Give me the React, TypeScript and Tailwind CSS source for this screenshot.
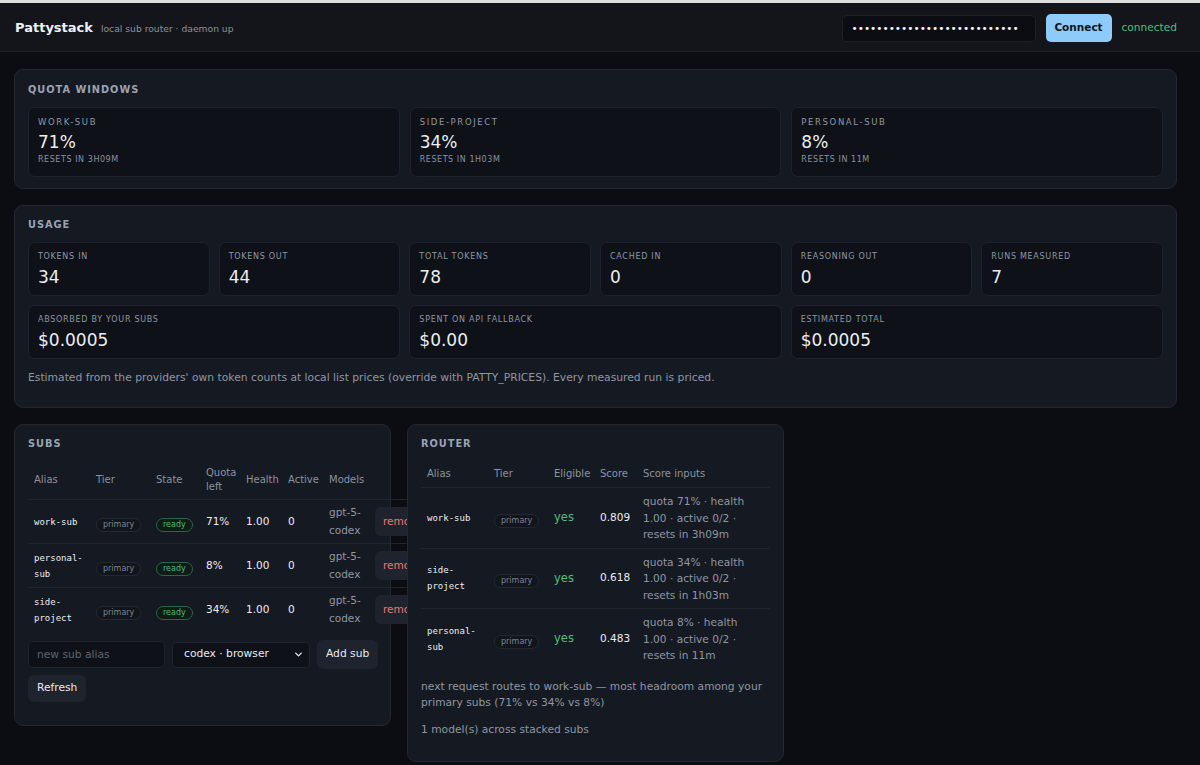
import { ChevronDown } from 'lucide-react';

const quotas = [
  { name: 'work-sub', pct: '71%', resets: 'resets in 3h09m' },
  { name: 'side-project', pct: '34%', resets: 'resets in 1h03m' },
  { name: 'personal-sub', pct: '8%', resets: 'resets in 11m' },
];

const usageTop = [
  { label: 'Tokens in', value: '34' },
  { label: 'Tokens out', value: '44' },
  { label: 'Total tokens', value: '78' },
  { label: 'Cached in', value: '0' },
  { label: 'Reasoning out', value: '0' },
  { label: 'Runs measured', value: '7' },
];

const usageCost = [
  { label: 'Absorbed by your subs', value: '$0.0005' },
  { label: 'Spent on API fallback', value: '$0.00' },
  { label: 'Estimated total', value: '$0.0005' },
];

const subs = [
  { alias: 'work-sub', quota: '71%' },
  { alias: 'personal-sub', quota: '8%' },
  { alias: 'side-project', quota: '34%' },
];

const routes = [
  { alias: 'work-sub', score: '0.809', inputs: 'quota 71% · health 1.00 · active 0/2 · resets in 3h09m' },
  { alias: 'side-project', score: '0.618', inputs: 'quota 34% · health 1.00 · active 0/2 · resets in 1h03m' },
  { alias: 'personal-sub', score: '0.483', inputs: 'quota 8% · health 1.00 · active 0/2 · resets in 11m' },
];

function SectionTitle({ children }: { children: string }) {
  return (
    <h2 className="mb-[11px] text-[9.8px] font-bold uppercase leading-[12px] tracking-[0.1em] text-[#9aa3b5]">
      {children}
    </h2>
  );
}

function Tile({ label, value, wide }: { label: string; value: string; wide?: boolean }) {
  return (
    <div
      className={`rounded-[7px] border border-[#1e222c] bg-[#0e1117] px-[9px] pb-[8px] pt-[8px] ${wide ? 'col-span-2' : ''}`}
    >
      <div className="text-[8px] uppercase leading-[12px] tracking-[0.09em] text-[#8f97a6]">{label}</div>
      <div className="mt-[4px] text-[17px] leading-[20px] text-[#eceef2]">{value}</div>
    </div>
  );
}

function Badge({ children, tone }: { children: string; tone: 'grey' | 'green' }) {
  const cls =
    tone === 'green'
      ? 'border-[#2a6547] bg-[#0f1c16] text-[#49b97a]'
      : 'border-[#232733] bg-[#12151c] text-[#7d8493]';
  return (
    <span className={`inline-block rounded-full border px-[6px] text-[8px] leading-[12px] ${cls}`}>{children}</span>
  );
}

export default function App() {
  return (
    <div className="min-h-screen bg-[#0b0d12] font-['DejaVu_Sans',sans-serif] text-[#e8eaef]">
      <div className="h-[3px] bg-[#dedede]" />
      {/* top bar */}
      <header className="flex h-[49px] items-center justify-between border-b border-[#1f2229] bg-[#13151b] pl-[15px] pr-[23px]">
        <div className="flex items-baseline gap-[8px] pt-[2px]">
          <span className="text-[13px] font-bold text-[#eef0f4]">Pattystack</span>
          <span className="text-[9.2px] text-[#8b919d]">local sub router · daemon up</span>
        </div>
        <div className="flex items-center gap-[10px] pt-[2px]">
          <input
            type="password"
            readOnly
            value="pattystack-local-token-xxxx"
            className="h-[27px] w-[194px] rounded-[5px] border border-[#1d2029] bg-[#0b0d12] px-[9px] text-[10.5px] text-[#f2f3f5] outline-none"
          />
          <button className="h-[28px] w-[66px] rounded-[5px] bg-[#8ecbfb] text-[10.5px] font-bold text-[#0d1520]">
            Connect
          </button>
          <span className="text-[10.6px] text-[#4fbf7c]">connected</span>
        </div>
      </header>

      <main className="flex flex-col gap-[16px] pb-[16px] pl-[14px] pr-[23px] pt-[17px]">
        {/* quota windows */}
        <section className="rounded-[9px] border border-[#232733] bg-[#151921] px-[13px] pb-[11px] pt-[14px]">
          <SectionTitle>Quota windows</SectionTitle>
          <div className="grid grid-cols-3 gap-[10px]">
            {quotas.map((q) => (
              <div key={q.name} className="rounded-[7px] border border-[#1e222c] bg-[#0e1117] px-[9px] pb-[10px] pt-[8px]">
                <div className="text-[8.5px] uppercase leading-[12px] tracking-[0.19em] text-[#9098a6]">{q.name}</div>
                <div className="mt-[4px] text-[17px] leading-[20px] text-[#eceef2]">{q.pct}</div>
                <div className="mt-[2px] text-[8px] uppercase leading-[12px] tracking-[0.07em] text-[#8a92a0]">
                  {q.resets}
                </div>
              </div>
            ))}
          </div>
        </section>

        {/* usage */}
        <section className="rounded-[9px] border border-[#232733] bg-[#151921] px-[13px] pb-[13px] pt-[13px]">
          <SectionTitle>Usage</SectionTitle>
          <div className="grid grid-cols-6 gap-x-[9px] gap-y-[9px]">
            {usageTop.map((u) => (
              <Tile key={u.label} label={u.label} value={u.value} />
            ))}
            {usageCost.map((u) => (
              <Tile key={u.label} label={u.label} value={u.value} wide />
            ))}
          </div>
          <p className="mb-[9px] mt-[11px] text-[10.75px] leading-[15px] text-[#9097a3]">
            Estimated from the providers' own token counts at local list prices (override with PATTY_PRICES). Every
            measured run is priced.
          </p>
        </section>

        <div className="grid grid-cols-3 items-start gap-[16px]">
          {/* subs */}
          <section className="rounded-[9px] border border-[#232733] bg-[#151921] px-[13px] pb-[23px] pt-[13px]">
            <SectionTitle>Subs</SectionTitle>
            <table className="w-[411px] table-fixed border-collapse text-left">
              <thead>
                <tr className="border-b border-[#20242d] text-[10px] leading-[14px] text-[#8b93a3]">
                  <th className="w-[62px] py-[5px] pl-[6px] font-normal">Alias</th>
                  <th className="w-[60px] py-[5px] pl-[6px] font-normal">Tier</th>
                  <th className="w-[50px] py-[5px] pl-[6px] font-normal">State</th>
                  <th className="w-[40px] py-[5px] pl-[6px] font-normal">Quota left</th>
                  <th className="w-[42px] py-[5px] pl-[6px] font-normal">Health</th>
                  <th className="w-[41px] py-[5px] pl-[6px] font-normal">Active</th>
                  <th className="w-[46px] py-[5px] pl-[6px] font-normal">Models</th>
                  <th className="w-[70px] py-[5px] pl-[6px] font-normal"></th>
                </tr>
              </thead>
              <tbody>
                {subs.map((s, i) => (
                  <tr key={s.alias} className={i > 0 ? 'border-t border-[#20242d]' : ''}>
                    <td className="py-[4px] pl-[6px] font-['DejaVu_Sans_Mono',monospace] text-[9px] leading-[16px] text-[#eceef2]">
                      {s.alias}
                    </td>
                    <td className="py-[4px] pl-[6px]">
                      <Badge tone="grey">primary</Badge>
                    </td>
                    <td className="py-[4px] pl-[6px]">
                      <Badge tone="green">ready</Badge>
                    </td>
                    <td className="py-[4px] pl-[6px] text-[10.5px] text-[#eceef2]">{s.quota}</td>
                    <td className="py-[4px] pl-[6px] text-[10.5px] text-[#eceef2]">1.00</td>
                    <td className="py-[4px] pl-[6px] text-[10.5px] text-[#eceef2]">0</td>
                    <td className="py-[4px] pl-[6px] text-[10.5px] leading-[17.5px] text-[#9097a3]">gpt-5-codex</td>
                    <td className="py-[4px] pl-[6px]">
                      <button className="h-[29px] whitespace-nowrap rounded-[6px] bg-[#1e232d] px-[8px] text-[10.5px] text-[#f07474]">
                        remove
                      </button>
                    </td>
                  </tr>
                ))}
              </tbody>
            </table>
            <div className="mt-[9px] flex items-center gap-[7px]">
              <input
                placeholder="new sub alias"
                className="h-[27px] w-[137px] shrink-0 rounded-[5px] border border-[#1f232c] bg-[#0e1117] px-[8px] text-[10.7px] text-[#e8eaef] outline-none placeholder:text-[#5d6471]"
              />
              <div className="flex h-[26px] w-[138px] shrink-0 items-center justify-between rounded-[5px] border border-[#1f232c] bg-[#0e1117] pl-[11px] pr-[5px] text-[10.7px] text-[#e8eaef]">
                <span>codex · browser</span>
                <ChevronDown size={11} strokeWidth={3} />
              </div>
              <button className="h-[29px] shrink-0 whitespace-nowrap rounded-[6px] bg-[#1e232d] px-[9px] text-[10.7px] text-[#e8eaef]">
                Add sub
              </button>
            </div>
            <button className="mt-[6px] h-[27px] rounded-[6px] bg-[#1e232d] px-[9px] text-[10.7px] text-[#e8eaef]">
              Refresh
            </button>
          </section>

          {/* router */}
          <section className="relative rounded-[9px] border border-[#232733] bg-[#151921] px-[13px] pb-[13px] pt-[13px]">
            <SectionTitle>Router</SectionTitle>
            <table className="w-full table-fixed border-collapse text-left">
              <thead>
                <tr className="border-b border-[#20242d] text-[10px] leading-[14px] text-[#8b93a3]">
                  <th className="w-[67px] py-[6px] pl-[6px] font-normal">Alias</th>
                  <th className="w-[60px] py-[6px] pl-[6px] font-normal">Tier</th>
                  <th className="w-[46px] py-[6px] pl-[6px] font-normal">Eligible</th>
                  <th className="w-[43px] py-[6px] pl-[6px] font-normal">Score</th>
                  <th className="py-[6px] pl-[6px] font-normal">Score inputs</th>
                </tr>
              </thead>
              <tbody>
                {routes.map((r, i) => (
                  <tr key={r.alias} className={i > 0 ? 'border-t border-[#20242d]' : ''}>
                    <td className="py-[5px] pl-[6px] font-['DejaVu_Sans_Mono',monospace] text-[9px] leading-[16px] text-[#eceef2]">
                      {r.alias}
                    </td>
                    <td className="py-[5px] pl-[6px]">
                      <Badge tone="grey">primary</Badge>
                    </td>
                    <td className="py-[5px] pl-[6px] text-[11.5px] text-[#4fbf7c]">yes</td>
                    <td className="py-[5px] pl-[6px] text-[10.5px] text-[#eceef2]">{r.score}</td>
                    <td className="py-[5px] pl-[6px] pr-[16px] text-[10.6px] leading-[16.5px] text-[#9097a3]">
                      {r.inputs}
                    </td>
                  </tr>
                ))}
              </tbody>
            </table>
            <p className="mt-[10px] text-[10.7px] leading-[16px] text-[#9097a3]">
              next request routes to work-sub — most headroom among your primary subs (71% vs 34% vs 8%)
            </p>
            <p className="mb-[10px] mt-[11px] text-[10.7px] leading-[16px] text-[#9097a3]">
              1 model(s) across stacked subs
            </p>
          </section>
        </div>
      </main>
    </div>
  );
}
